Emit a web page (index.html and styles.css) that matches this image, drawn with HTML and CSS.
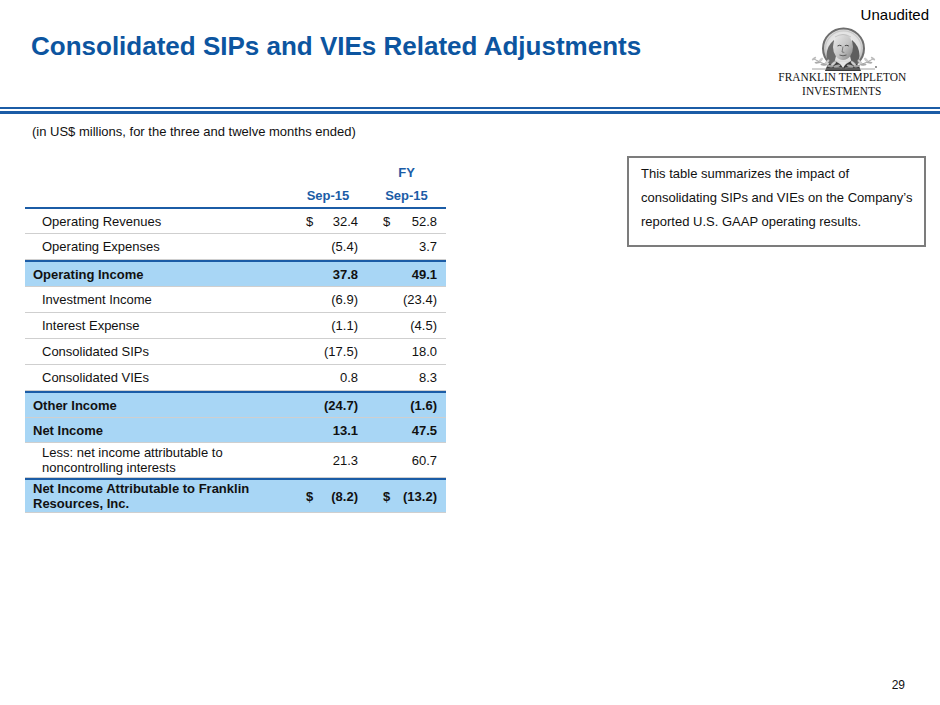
FILE: index.html
```html
<!DOCTYPE html>
<html lang="en">
<head>
<meta charset="utf-8">
<title>Consolidated SIPs and VIEs Related Adjustments</title>
<link rel="stylesheet" href="styles.css">
</head>
<body>
<div class="page">
  <header class="top">
    <h1 class="title">Consolidated SIPs and VIEs Related Adjustments</h1>
    <div class="brand">
      <div class="unaudited">Unaudited</div>
      <div class="logo">
        <svg class="portrait" viewBox="0 0 70 44" width="70" height="44" aria-hidden="true">
          <defs>
            <radialGradient id="bg" cx="50%" cy="40%" r="60%">
              <stop offset="0" stop-color="#f2f2f2"/>
              <stop offset="0.7" stop-color="#dedede"/>
              <stop offset="1" stop-color="#9a9a9a"/>
            </radialGradient>
            <linearGradient id="face" x1="0" y1="0" x2="1" y2="1">
              <stop offset="0" stop-color="#ececec"/>
              <stop offset="0.55" stop-color="#c4c4c4"/>
              <stop offset="1" stop-color="#7e7e7e"/>
            </linearGradient>
            <g id="branch">
              <path d="M34 41 Q20 40 6 32" fill="none" stroke="#8e8e8e" stroke-width="0.8"/>
              <ellipse cx="29" cy="39" rx="3.4" ry="1.3" transform="rotate(-15 29 39)" fill="#a8a8a8"/>
              <ellipse cx="25.5" cy="36.6" rx="3.4" ry="1.3" transform="rotate(-45 25.5 36.6)" fill="#d0d0d0" stroke="#9a9a9a" stroke-width="0.3"/>
              <ellipse cx="22" cy="39.2" rx="3.2" ry="1.1" transform="rotate(10 22 39.2)" fill="#a0a0a0"/>
              <ellipse cx="19" cy="35.2" rx="3.2" ry="1.2" transform="rotate(-50 19 35.2)" fill="#d0d0d0" stroke="#9a9a9a" stroke-width="0.3"/>
              <ellipse cx="15.5" cy="37.6" rx="3.1" ry="1.1" transform="rotate(5 15.5 37.6)" fill="#a8a8a8"/>
              <ellipse cx="12.5" cy="33.4" rx="3" ry="1.1" transform="rotate(-50 12.5 33.4)" fill="#cdcdcd" stroke="#9a9a9a" stroke-width="0.3"/>
              <ellipse cx="9.5" cy="35.6" rx="3" ry="1" transform="rotate(-5 9.5 35.6)" fill="#ababab"/>
              <ellipse cx="6" cy="31.6" rx="2.6" ry="1" transform="rotate(-35 6 31.6)" fill="#bdbdbd"/>
            </g>
          </defs>
          <ellipse cx="35.5" cy="21.5" rx="20.5" ry="20" fill="url(#bg)" stroke="#6e6e6e" stroke-width="2"/>
          <ellipse cx="35.5" cy="21.5" rx="18" ry="17.6" fill="none" stroke="#c9c9c9" stroke-width="1.2"/>
          <path d="M17 44 Q19 36 27 34 L35 39 L43 34 Q51 36 53 44 Z" fill="#3a3a3a"/>
          <path d="M31 35 L35 41 L39 35 Z" fill="#e4e4e4"/>
          <path d="M26 13 Q18.5 19 18.5 29 Q19.5 37 25.5 39 L28 29 Z" fill="#6a6a6a"/>
          <path d="M44 13 Q51.5 19 51.5 29 Q50.5 37 44.5 39 L42 29 Z" fill="#5e5e5e"/>
          <ellipse cx="35" cy="20" rx="10" ry="13" fill="url(#face)"/>
          <path d="M29.5 19 Q31.5 17.6 33.5 18.8 M36.8 18.8 Q38.8 17.6 40.8 19" stroke="#444" stroke-width="1" fill="none"/>
          <path d="M35 19.5 L34 25 L36.3 25.4" stroke="#666" stroke-width="0.8" fill="none"/>
          <path d="M31.5 28 Q35 29.6 38.5 28" stroke="#555" stroke-width="0.9" fill="none"/>
          <path d="M27 10 Q35 5 43 10" stroke="#b0b0b0" stroke-width="0.6" fill="none"/>
          <use href="#branch"/>
          <use href="#branch" transform="translate(71 0) scale(-1 1)"/>
          <line x1="4" y1="42" x2="67" y2="42" stroke="#8a8a8a" stroke-width="0.8"/>
          <circle cx="68" cy="40" r="0.9" fill="#666"/>
        </svg>
        <div class="wordmark"><span>FRANKLIN TEMPLETON</span></div>
        <div class="wordmark"><span>INVESTMENTS</span></div>
      </div>
    </div>
  </header>
  <div class="rule"></div>

  <main class="content">
    <section class="figures">
      <p class="units">(in US$ millions, for the three and twelve months ended)</p>
      <table class="adj">
        <colgroup>
          <col class="c-label">
          <col class="c-num1">
          <col class="c-gap">
          <col class="c-num2">
          <col class="c-end">
        </colgroup>
        <thead>
          <tr class="h-top">
            <td></td><td></td><td></td>
            <td class="colhead">FY</td>
            <td></td>
          </tr>
          <tr class="h-bottom">
            <td></td>
            <td class="colhead">Sep-15</td>
            <td></td>
            <td class="colhead">Sep-15</td>
            <td></td>
          </tr>
        </thead>
        <tbody>
          <tr class="row first">
            <td class="label">Operating Revenues</td>
            <td class="num n1"><div class="cell"><span>$</span><span>32.4</span></div></td>
            <td></td>
            <td class="num n2"><div class="cell"><span>$</span><span>52.8</span></div></td>
            <td></td>
          </tr>
          <tr class="row">
            <td class="label">Operating Expenses</td>
            <td class="num n1"><div class="cell"><span></span><span>(5.4)</span></div></td>
            <td></td>
            <td class="num n2"><div class="cell"><span></span><span>3.7</span></div></td>
            <td></td>
          </tr>
          <tr class="row band">
            <td class="label">Operating Income</td>
            <td class="num n1"><div class="cell"><span></span><span>37.8</span></div></td>
            <td></td>
            <td class="num n2"><div class="cell"><span></span><span>49.1</span></div></td>
            <td></td>
          </tr>
          <tr class="row">
            <td class="label">Investment Income</td>
            <td class="num n1"><div class="cell"><span></span><span>(6.9)</span></div></td>
            <td></td>
            <td class="num n2"><div class="cell"><span></span><span>(23.4)</span></div></td>
            <td></td>
          </tr>
          <tr class="row">
            <td class="label">Interest Expense</td>
            <td class="num n1"><div class="cell"><span></span><span>(1.1)</span></div></td>
            <td></td>
            <td class="num n2"><div class="cell"><span></span><span>(4.5)</span></div></td>
            <td></td>
          </tr>
          <tr class="row">
            <td class="label">Consolidated SIPs</td>
            <td class="num n1"><div class="cell"><span></span><span>(17.5)</span></div></td>
            <td></td>
            <td class="num n2"><div class="cell"><span></span><span>18.0</span></div></td>
            <td></td>
          </tr>
          <tr class="row">
            <td class="label">Consolidated VIEs</td>
            <td class="num n1"><div class="cell"><span></span><span>0.8</span></div></td>
            <td></td>
            <td class="num n2"><div class="cell"><span></span><span>8.3</span></div></td>
            <td></td>
          </tr>
          <tr class="row band">
            <td class="label">Other Income</td>
            <td class="num n1"><div class="cell"><span></span><span>(24.7)</span></div></td>
            <td></td>
            <td class="num n2"><div class="cell"><span></span><span>(1.6)</span></div></td>
            <td></td>
          </tr>
          <tr class="row band cont">
            <td class="label">Net Income</td>
            <td class="num n1"><div class="cell"><span></span><span>13.1</span></div></td>
            <td></td>
            <td class="num n2"><div class="cell"><span></span><span>47.5</span></div></td>
            <td></td>
          </tr>
          <tr class="row tall">
            <td class="label">Less: net income attributable to<br>noncontrolling interests</td>
            <td class="num n1"><div class="cell"><span></span><span>21.3</span></div></td>
            <td></td>
            <td class="num n2"><div class="cell"><span></span><span>60.7</span></div></td>
            <td></td>
          </tr>
          <tr class="row band tall">
            <td class="label">Net Income Attributable to Franklin<br>Resources, Inc.</td>
            <td class="num n1"><div class="cell"><span>$</span><span>(8.2)</span></div></td>
            <td></td>
            <td class="num n2"><div class="cell"><span>$</span><span>(13.2)</span></div></td>
            <td></td>
          </tr>
        </tbody>
      </table>
    </section>

    <aside class="note">
      <p>This table summarizes the impact of consolidating SIPs and VIEs on the Company’s reported U.S. GAAP operating results.</p>
    </aside>
  </main>

  <footer class="pageno">29</footer>
</div>
</body>
</html>
```

FILE: styles.css
```css
* { box-sizing: border-box; }

html, body {
  margin: 0;
  padding: 0;
  background: #ffffff;
}

body {
  font-family: "Liberation Sans", Arial, sans-serif;
  color: #000000;
}

.page {
  width: 940px;
  height: 705px;
  display: flex;
  flex-direction: column;
  overflow: hidden;
}

/* ---------- header ---------- */
.top {
  height: 107px;
  display: flex;
  justify-content: space-between;
}

.title {
  margin: 31px 0 0 31px;
  font-size: 26px;
  line-height: 30px;
  font-weight: bold;
  color: #0c55a0;
  white-space: nowrap;
}

.brand {
  width: 162px;
  display: flex;
  flex-direction: column;
  align-items: flex-start;
}

.unaudited {
  align-self: flex-end;
  margin-top: 6px;
  padding-right: 11px;
  font-size: 15px;
  line-height: 18px;
  color: #000;
}

.logo {
  width: 128px;
  margin-top: 3px;
  display: flex;
  flex-direction: column;
  align-items: center;
}

.portrait {
  display: block;
  margin-left: 2px;
}

.wordmark {
  font-family: "Liberation Serif", "Times New Roman", serif;
  font-size: 12px;
  line-height: 13.5px;
  color: #111;
  white-space: nowrap;
}

.wordmark:first-of-type { margin-top: 0; }

.wordmark span {
  display: inline-block;
  transform: scaleX(0.95);
  transform-origin: center;
}

.rule {
  height: 7px;
  border-top: 2px solid #1b5ca6;
  padding-top: 2px;
  background-color: #1b5ca6;
  background-clip: content-box;
}

/* ---------- content ---------- */
.content {
  flex: 1;
  display: flex;
  align-items: flex-start;
}

.figures {
  width: 446px;
  padding-left: 25px;
}

.units {
  margin: 10px 0 0 7px;
  font-size: 13px;
  line-height: 16px;
  color: #111;
}

.adj {
  margin-top: 21px;
  width: 421px;
  table-layout: fixed;
  border-collapse: separate;
  border-spacing: 0;
  font-size: 13px;
  color: #111;
}

.c-label { width: 272px; }
.c-num1 { width: 62px; }
.c-gap { width: 17px; }
.c-num2 { width: 61px; }
.c-end { width: 9px; }

.adj td {
  padding: 0;
  vertical-align: middle;
}

.h-top td { height: 23px; }

.h-bottom td {
  height: 25px;
  border-bottom: 2px solid #1b5ca6;
}

.colhead {
  text-align: center;
  font-weight: bold;
  color: #1b5ca6;
}

.row td {
  height: 26px;
  border-bottom: 1px solid #cfcfcf;
}

.row.first td { height: 25px; }

.row .label {
  padding-left: 17px;
  line-height: 15px;
}

.row.band td {
  height: 27px;
  background: #a8d6f5;
  border-top: 2px solid #1b5ca6;
  font-weight: bold;
}

.row.band .label { padding-left: 8px; }

.row.band.cont td {
  height: 25px;
  border-top: none;
}

.row.tall td { height: 35px; }
.row.band.tall td { height: 35px; }

.cell {
  display: flex;
  justify-content: space-between;
}

.n1 .cell { padding: 0 1px 0 9px; }
.n2 .cell { padding: 0 0 0 7px; }

/* ---------- call-out ---------- */
.note {
  margin: 42px 0 0 181px;
  width: 299px;
  border: 2px solid #7c7c7c;
  padding: 4px 8px 11px 12px;
}

.note p {
  margin: 0;
  font-size: 13px;
  line-height: 24px;
  color: #111;
}

/* ---------- footer ---------- */
.pageno {
  text-align: right;
  padding: 0 35px 13px 0;
  font-size: 12px;
  line-height: 14px;
  color: #111;
}
```
